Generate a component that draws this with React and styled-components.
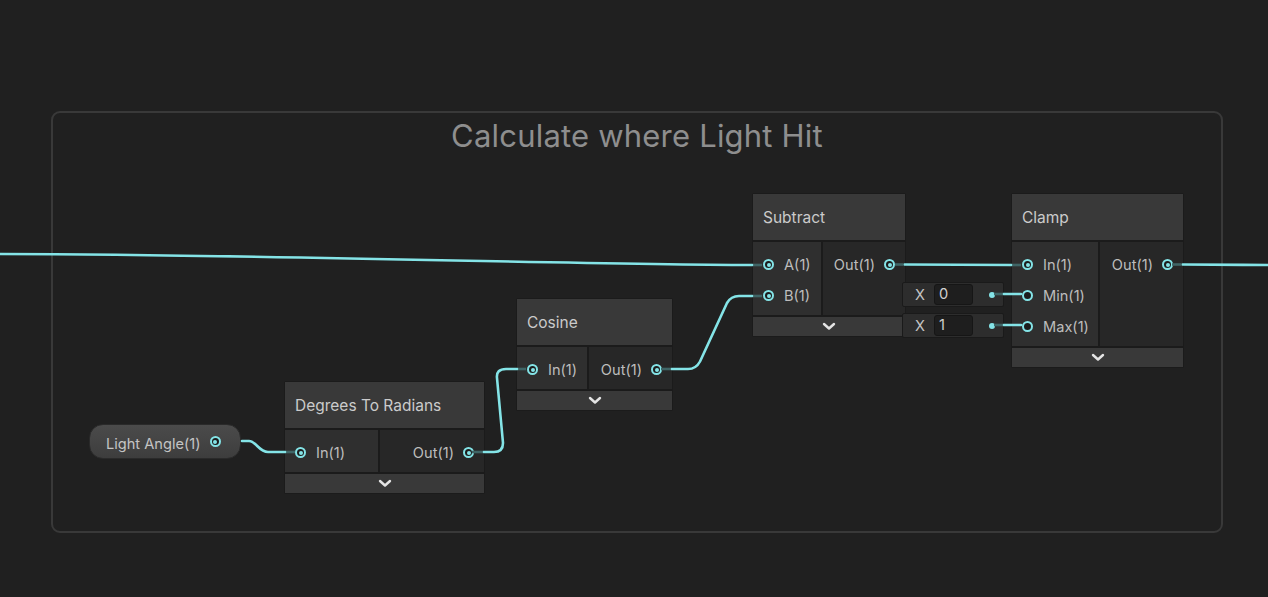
import styled, { createGlobalStyle } from 'styled-components';

const Global = createGlobalStyle`
  html, body { margin: 0; padding: 0; background: #202020; }
  * { box-sizing: border-box; }
`;

const CYAN = '#84e4e7';
const DIM = '#3f6566';

const Canvas = styled.div`
  position: relative;
  width: 1268px;
  height: 597px;
  overflow: hidden;
  background: #202020;
  font-family: Inter, "Noto Sans", sans-serif;
`;

const Group = styled.div`
  position: absolute;
  left: 51px;
  top: 111px;
  width: 1172px;
  height: 422px;
  border: 2px solid #393939;
  border-radius: 9px;
  display: flex;
  justify-content: center;
`;

const GroupTitle = styled.div`
  margin-top: 4px;
  font-size: 31px;
  line-height: 38px;
  color: #8e8e8e;
  letter-spacing: 0.2px;
`;

const NodeBox = styled.div`
  position: absolute;
  left: ${(p) => p.$x}px;
  top: ${(p) => p.$y - 1}px;
  width: ${(p) => p.$w}px;
  background: #1b1b1b;
  border: 1px solid #1b1b1b;
  border-radius: 2px;
  display: flex;
  flex-direction: column;
  gap: 2px;
`;

const Header = styled.div`
  height: 46px;
  background: #393939;
  display: flex;
  align-items: center;
  padding-left: 10px;
  font-size: 15.5px;
  color: #cbcbcb;
`;

const Body = styled.div`
  display: flex;
  gap: 2px;
`;

const Inputs = styled.div`
  width: ${(p) => p.$w}px;
  background: #2f2f2f;
  padding: 7px 0 4px;
`;

const Outputs = styled.div`
  flex: 1;
  background: #272727;
  padding: 7px 0 4px;
`;

const Row = styled.div`
  height: 31px;
  display: flex;
  align-items: center;
  gap: ${(p) => (p.$out ? 9 : 10)}px;
  justify-content: ${(p) => (p.$out ? 'flex-end' : 'flex-start')};
  padding: ${(p) => (p.$out ? '0 10px 0 0' : '0 0 0 10px')};
  font-size: 14.6px;
  color: #bdbdbd;
`;

const Port = styled.span`
  width: 11px;
  height: 11px;
  flex: none;
  border-radius: 50%;
  border: 2px solid ${CYAN};
  background: #1c1c1c;
  display: flex;
  align-items: center;
  justify-content: center;
  &::after {
    content: '';
    width: 4px;
    height: 4px;
    border-radius: 50%;
    background: ${(p) => (p.$empty ? 'transparent' : CYAN)};
  }
`;

const Footer = styled.div`
  height: 19px;
  background: #393939;
  display: flex;
  align-items: center;
  justify-content: center;
`;

const Chevron = () => (
  <svg width="14" height="9" viewBox="0 0 14 9">
    <polyline points="2,2 7,6.5 12,2" fill="none" stroke="#e4e4e4" strokeWidth="2.4" strokeLinecap="round" strokeLinejoin="round" />
  </svg>
);

const Node = ({ x, y, w, inW, title, inputs, outputs, empty = [] }) => (
  <NodeBox $x={x} $y={y} $w={w}>
    <Header>{title}</Header>
    <Body>
      <Inputs $w={inW}>
        {inputs.map((name) => (
          <Row key={name}>
            <Port $empty={empty.includes(name)} />
            {name}
          </Row>
        ))}
      </Inputs>
      <Outputs>
        {outputs.map((name) => (
          <Row key={name} $out>
            {name}
            <Port />
          </Row>
        ))}
      </Outputs>
    </Body>
    <Footer>
      <Chevron />
    </Footer>
  </NodeBox>
);

const Pill = styled.div`
  position: absolute;
  left: 89px;
  top: 424px;
  width: 152px;
  height: 35px;
  border-radius: 14px;
  background: linear-gradient(#4b4b4b, #3d3d3d);
  border: 1px solid #2a2a2a;
  display: flex;
  align-items: center;
  padding: 0 0 0 16px;
  gap: 9px;
  font-size: 14.6px;
  color: #c4c4c4;
  & > span:first-child {
    margin-top: 4px;
  }
`;

const Field = styled.div`
  position: absolute;
  left: 902px;
  top: ${(p) => p.$y}px;
  width: 102px;
  height: 25px;
  background: #2d2d2d;
  border: 1px solid #1a1a1a;
  border-radius: 2px;
  display: flex;
  align-items: center;
  padding-left: 12px;
  font-size: 14.6px;
  color: #c4c4c4;
`;

const FieldInput = styled.div`
  margin-left: 9px;
  width: 39px;
  height: 21px;
  background: #1e1e1e;
  border: 1px solid #161616;
  border-radius: 3px;
  padding-left: 4px;
  line-height: 19px;
  color: #d0d0d0;
`;

const Dot = styled.span`
  margin-left: 16px;
  width: 6px;
  height: 6px;
  border-radius: 50%;
  background: ${CYAN};
`;

const Wires = styled.svg`
  position: absolute;
  left: 0;
  top: 0;
  pointer-events: none;
`;

const bright = [
  'M0 254 C 300 255, 560 264.5, 752 265',
  'M905 264.5 L1011 265',
  'M1183 264.5 C 1220 264.5, 1240 265, 1268 265',
  'M242 441 L249 441 C256 441 259 452 268 452 L285 452',
  'M484 452 L494 452 Q503 452 503 443 L497 378 Q496 369 506 369 L517 369',
  'M672 369 L688 369 Q696 369 700 361.5 L727 303 Q731 296 739 296 L752 296',
  'M1004 294 L1021 294',
  'M1004 325 L1021 325',
];

const dim = [
  'M752 265 L762 265',
  'M895 264.5 L905 264.5',
  'M1011 265 L1021 265',
  'M1172 264.5 L1183 264.5',
  'M285 452 L295 452',
  'M472 452 L484 452',
  'M517 369 L526 369',
  'M661 369 L672 369',
  'M752 296 L762 296',
  'M994 294 L1004 294',
  'M994 325 L1004 325',
];

export default function App() {
  return (
    <>
      <Global />
      <Canvas>
        <Group>
          <GroupTitle>Calculate where Light Hit</GroupTitle>
        </Group>

        <Pill>
          <span>Light Angle(1)</span>
          <Port />
        </Pill>

        <Node x={284} y={382} w={201} inW={93} title="Degrees To Radians" inputs={['In(1)']} outputs={['Out(1)']} />
        <Node x={516} y={299} w={157} inW={70} title="Cosine" inputs={['In(1)']} outputs={['Out(1)']} />
        <Node x={752} y={194} w={154} inW={68} title="Subtract" inputs={['A(1)', 'B(1)']} outputs={['Out(1)']} />
        <Node
          x={1011}
          y={194}
          w={173}
          inW={86}
          title="Clamp"
          inputs={['In(1)', 'Min(1)', 'Max(1)']}
          outputs={['Out(1)']}
          empty={['Min(1)', 'Max(1)']}
        />

        <Field $y={282}>
          X<FieldInput>0</FieldInput>
          <Dot />
        </Field>
        <Field $y={313}>
          X<FieldInput>1</FieldInput>
          <Dot />
        </Field>

        <Wires width="1268" height="597">
          {dim.map((d) => (
            <path key={d} d={d} fill="none" stroke={DIM} strokeWidth="2.6" />
          ))}
          {bright.map((d) => (
            <path key={d} d={d} fill="none" stroke={CYAN} strokeWidth="2.6" strokeLinecap="round" strokeLinejoin="round" />
          ))}
        </Wires>
      </Canvas>
    </>
  );
}
